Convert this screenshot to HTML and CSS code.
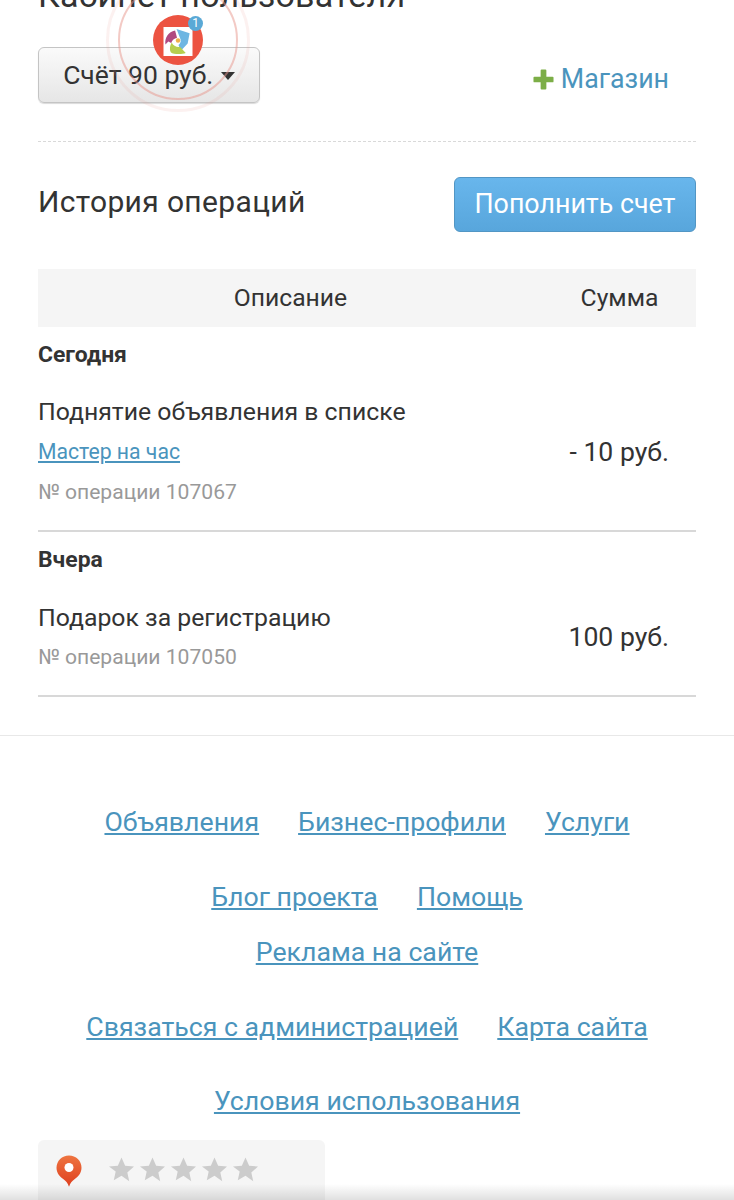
FILE: index.html
```html
<!DOCTYPE html>
<html lang="en">
<head>
  <meta charset="UTF-8" />
  <meta name="viewport" content="width=device-width, initial-scale=1.0"/>
  <title>Кабинет пользователя</title>
  <link rel="stylesheet" href="styles.css">
</head>
<body>
  <div class="content">
    <h1 class="title">Кабинет пользователя</h1>

    <div class="account-row">
      <div class="account-button">Счёт 90 руб. <span class="caret"></span></div>
      <a class="shop-link" href="#">
        <svg class="plus" viewBox="0 0 22 22"><path d="M8 1.500a1 1 0 0 1 1-1h4a1 1 0 0 1 1 1V8h6.500a1 1 0 0 1 1 1v4a1 1 0 0 1-1 1H14v6.500a1 1 0 0 1-1 1H9a1 1 0 0 1-1-1V14H1.500a1 1 0 0 1-1-1V9a1 1 0 0 1 1-1H8z"/></svg>
        Магазин
      </a>
    </div>

    <div class="history-head">
      <h2 class="history-title">История операций</h2>
      <div class="pay-button">Пополнить счет</div>
    </div>

    <div class="table-head">
      <div class="col-desc">Описание</div>
      <div class="col-sum">Сумма</div>
    </div>

    <div class="group">
      <div class="day">Сегодня</div>
      <div class="operation">
        <div class="op-info">
          <div class="op-name">Поднятие объявления в списке</div>
          <a class="op-link" href="#">Мастер на час</a>
          <div class="op-number">№ операции 107067</div>
        </div>
        <div class="op-sum">- 10 руб.</div>
      </div>
    </div>

    <div class="group">
      <div class="day">Вчера</div>
      <div class="operation">
        <div class="op-info">
          <div class="op-name">Подарок за регистрацию</div>
          <div class="op-number">№ операции 107050</div>
        </div>
        <div class="op-sum">100 руб.</div>
      </div>
    </div>
  </div>

  <footer class="footer">
    <div class="links">
      <div class="links-row"><a href="#">Объявления</a><a href="#">Бизнес-профили</a><a href="#">Услуги</a></div>
      <div class="links-row"><a href="#">Блог проекта</a><a href="#">Помощь</a></div>
      <div class="links-row tight"><a href="#">Реклама на сайте</a></div>
      <div class="links-row"><a href="#">Связаться с администрацией</a><a href="#">Карта сайта</a></div>
      <div class="links-row"><a href="#">Условия использования</a></div>
    </div>

    <div class="rating">
      <svg class="pin" viewBox="0 0 26 32">
        <defs>
          <linearGradient id="pinfill" x1="0" y1="0" x2="0" y2="1">
            <stop offset="0" stop-color="#ee7440"/>
            <stop offset="1" stop-color="#de3f1e"/>
          </linearGradient>
        </defs>
        <path d="M13 0.500C6 0.500 0.500 5.800 0.500 12.800c0 5.500 3.600 9 7 11.500 2.600 1.900 4.200 3.700 5.500 7.400 1.300-3.700 2.900-5.500 5.500-7.400 3.400-2.500 7-6 7-11.500C25.500 5.800 20 0.500 13 0.500z" fill="url(#pinfill)"/>
        <circle cx="13" cy="12.500" r="4.500" fill="#fff"/>
      </svg>
      <div class="stars">
        <svg class="star" viewBox="0 0 24 24"><path d="M12 .5l3.500 7.800 8.500.9-6.400 5.700 1.800 8.400L12 18.100l-7.400 4.200 1.800-8.400L0 9.200l8.500-.9z"/></svg>
        <svg class="star" viewBox="0 0 24 24"><path d="M12 .5l3.500 7.800 8.500.9-6.400 5.700 1.800 8.400L12 18.100l-7.400 4.200 1.800-8.400L0 9.200l8.500-.9z"/></svg>
        <svg class="star" viewBox="0 0 24 24"><path d="M12 .5l3.500 7.800 8.500.9-6.400 5.700 1.800 8.400L12 18.100l-7.400 4.200 1.800-8.400L0 9.200l8.500-.9z"/></svg>
        <svg class="star" viewBox="0 0 24 24"><path d="M12 .5l3.500 7.800 8.500.9-6.400 5.700 1.800 8.400L12 18.100l-7.400 4.200 1.800-8.400L0 9.200l8.500-.9z"/></svg>
        <svg class="star" viewBox="0 0 24 24"><path d="M12 .5l3.500 7.800 8.500.9-6.400 5.700 1.800 8.400L12 18.100l-7.400 4.200 1.800-8.400L0 9.200l8.500-.9z"/></svg>
      </div>
    </div>
  </footer>

  <!-- floating app bubble, sits over the page -->
  <div class="bubble-ring outer"></div>
  <div class="bubble-ring inner"></div>
  <div class="bubble">
    <svg class="bubble-logo" viewBox="0 0 30 30">
      <rect width="30" height="30" fill="#fff"/>
      <path d="M2 18C1 11 5 5 12 3.500l2 7.500c-3 .5-5 2.500-6 5.500L5 15z" fill="#b04a80"/>
      <path d="M13.500 2L27 6.500 25 17l-7 7.500-2.500-6c2.500-1.500 3-5 1.500-7.500z" fill="#6eb6e2"/>
      <path d="M8.500 16c1.500 3.500 5 5 8.500 4.500l6 6.500c-4 1.500-13 1.500-15.500-1-1.500-2.500-1-7 1-10z" fill="#b6cf4e"/>
      <circle cx="15" cy="14" r="2.300" fill="#eeb04a"/>
    </svg>
    <div class="bubble-badge">1</div>
  </div>

  <div class="bottom-shade"></div>
</body>
</html>
```

FILE: styles.css
```css
* {
  box-sizing: border-box;
}

html, body {
  height: 1200px;
  overflow: hidden;
}

body {
  margin: 0;
  position: relative;
  font-family: Roboto, sans-serif;
  color: #333;
  background: #fff;
}

a {
  color: #4a94bd;
}

.content {
  padding: 0 38px;
}

.title {
  margin: -27px 0 0;
  height: 74px;
  font-size: 34px;
  line-height: 44px;
  font-weight: 400;
  letter-spacing: 0.2px;
}

.account-row {
  display: flex;
  justify-content: space-between;
  align-items: flex-start;
  height: 95px;
  border-bottom: 1px dashed #d9d9d9;
}

.account-button {
  width: 222px;
  height: 56px;
  line-height: 53px;
  text-align: center;
  font-size: 26.500px;
  background: linear-gradient(#fafafa, #e6e6e6);
  border: 1px solid #c4c4c4;
  border-radius: 6px;
  box-shadow: 0 1px 1px rgba(0, 0, 0, 0.15);
}

.caret {
  display: inline-block;
  vertical-align: 4px;
  margin-left: 1px;
  border-top: 8px solid #333;
  border-left: 7.500px solid transparent;
  border-right: 7.500px solid transparent;
}

.shop-link {
  display: flex;
  align-items: center;
  gap: 7px;
  margin: 13px 27px 0 0;
  font-size: 26.750px;
  line-height: 38px;
  text-decoration: none;
}

.plus {
  width: 21px;
  height: 21px;
  fill: #7cae47;
}

.history-head {
  display: flex;
  justify-content: space-between;
  align-items: flex-start;
  height: 127px;
  padding-top: 35px;
}

.history-title {
  margin: -3px 0 0;
  font-size: 30px;
  line-height: 55px;
  font-weight: 400;
  letter-spacing: 0.35px;
}

.pay-button {
  width: 242px;
  height: 55px;
  line-height: 52px;
  text-align: center;
  font-size: 26.800px;
  color: #fff;
  background: linear-gradient(#68b6ec, #58a6dc);
  border: 1px solid #5296c4;
  border-radius: 6px;
}

.table-head {
  display: flex;
  height: 58px;
  line-height: 58px;
  font-size: 24.700px;
  text-align: center;
  background: #f5f5f5;
}

.col-desc {
  flex: 1;
}

.col-sum {
  width: 153px;
}

.group {
  border-bottom: 2px solid #d8d8d8;
}

.day {
  height: 65px;
  line-height: 55px;
  font-size: 22.900px;
  font-weight: 700;
}

.operation {
  display: flex;
  justify-content: space-between;
  align-items: center;
  padding-bottom: 19px;
}

.group + .group .day {
  height: 66px;
  line-height: 55px;
}

.group + .group .operation {
  padding-bottom: 20px;
}

.op-name {
  font-size: 24.800px;
  line-height: 40px;
}

.op-link {
  display: block;
  font-size: 21.200px;
  line-height: 40px;
}

.op-number {
  font-size: 21.100px;
  line-height: 39px;
  color: #999;
}

.group + .group .op-number {
  line-height: 37px;
}

.op-sum {
  padding-right: 27px;
  font-size: 26.600px;
}

.footer {
  margin-top: 38px;
  padding: 0 38px;
  border-top: 1px solid #e8e8e8;
}

.links {
  padding-top: 48px;
}

.links-row {
  display: flex;
  justify-content: center;
  gap: 39px;
  height: 75px;
  font-size: 26.700px;
  line-height: 76px;
}

.links-row.tight {
  height: 55px;
  margin-top: -20px;
}

.links-row.tight + .links-row {
  height: 74px;
  margin-top: 20px;
}

.rating {
  display: flex;
  align-items: flex-start;
  gap: 27px;
  width: 287px;
  height: 90px;
  margin-top: 2px;
  padding: 15px 18px;
  background: #f5f5f5;
  border-radius: 6px;
}

.pin {
  width: 26px;
  height: 32px;
}

.stars {
  display: flex;
  gap: 6px;
  margin-top: 2px;
}

.star {
  width: 25px;
  height: 25px;
  fill: #ccc;
}

.bubble {
  position: absolute;
  left: 153px;
  top: 15px;
  width: 50px;
  height: 50px;
  border-radius: 50%;
  background: #ec5341;
}

.bubble-logo {
  position: absolute;
  left: 10px;
  top: 12px;
  width: 30px;
  height: 29px;
}

.bubble-badge {
  position: absolute;
  left: 35px;
  top: 1px;
  width: 15px;
  height: 15px;
  border-radius: 50%;
  background: #5aa9d6;
  color: #fff;
  font-size: 12px;
  line-height: 15px;
  text-align: center;
}

.bubble-ring {
  position: absolute;
  border-radius: 50%;
}

.bubble-ring.inner {
  left: 118px;
  top: -20px;
  width: 120px;
  height: 120px;
  border: 2.500px solid rgba(232, 150, 140, 0.5);
}

.bubble-ring.outer {
  left: 106px;
  top: -32px;
  width: 144px;
  height: 144px;
  border: 3px solid rgba(232, 150, 140, 0.13);
}

.bottom-shade {
  position: absolute;
  left: 0;
  right: 0;
  bottom: 0;
  height: 16px;
  background: linear-gradient(rgba(0, 0, 0, 0), rgba(0, 0, 0, 0.12));
}
```
